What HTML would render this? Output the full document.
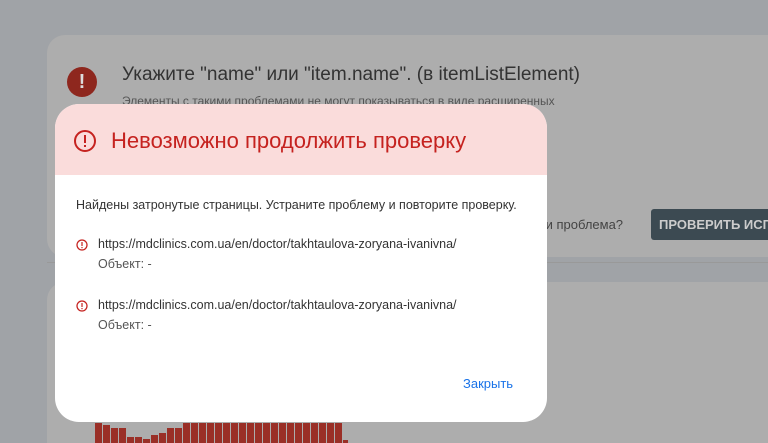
<!DOCTYPE html><html><head><meta charset="utf-8"><style>
html,body{margin:0;width:768px;height:443px;overflow:hidden}
body{background:#a0a3a7;position:relative;font-family:"Liberation Sans",sans-serif}
.a{position:absolute}
.b{position:absolute;background:#9a2f27;width:7px;bottom:0}
</style></head><body>
<div class="a" style="left:47px;top:35px;width:760px;height:222px;background:#adadad;border-radius:18px"></div>
<div class="a" style="left:47px;top:282px;width:760px;height:161px;background:#adadad;border-radius:18px 18px 0 0"></div>
<div class="a" style="left:47px;top:262px;width:721px;height:1px;background:#999"></div>
<div class="a" style="left:67px;top:67px;width:30px;height:30px;border-radius:50%;background:#8e271e;color:#ddd;font-weight:bold;font-size:20px;text-align:center;line-height:30px">!</div>
<div class="a" style="left:122px;top:64px;font-size:19px;color:#333;white-space:nowrap">Укажите "name" или "item.name". (в itemListElement)</div>
<div class="a" style="left:122px;top:94px;font-size:12px;color:#555;white-space:nowrap">Элементы с такими проблемами не могут показываться в виде расширенных</div>
<div class="a" style="left:538px;top:217px;font-size:13px;color:#444;white-space:nowrap">ли проблема?</div>
<div class="a" style="left:651px;top:209px;width:130px;height:31px;background:#3c4a52;border-radius:3px;color:#ccc;font-weight:bold;font-size:13px;line-height:31px;padding-left:8px;box-sizing:border-box;white-space:nowrap;overflow:hidden">ПРОВЕРИТЬ ИСПРАВЛЕНИЕ</div>
<div class="a" style="left:55px;top:104px;width:492px;height:318px;background:#fff;border-radius:24px;overflow:hidden;z-index:2">
<div style="height:71px;background:#fadcdb;position:relative">
<svg class="a" style="left:18px;top:25px" width="24" height="24" viewBox="0 0 24 24"><circle cx="12" cy="12" r="10" fill="none" stroke="#c5221f" stroke-width="2"/><rect x="11" y="6" width="2" height="8" fill="#c5221f"/><rect x="11" y="16" width="2" height="2" fill="#c5221f"/></svg>
<div class="a" style="left:56px;top:24px;font-size:22px;color:#c5221f;white-space:nowrap">Невозможно продолжить проверку</div></div>
<div class="a" style="left:21px;top:94px;font-size:12.5px;color:#333;white-space:nowrap">Найдены затронутые страницы. Устраните проблему и повторите проверку.</div>
<svg class="a" style="left:21px;top:135px" width="12" height="12" viewBox="0 0 24 24"><circle cx="12" cy="12" r="10" fill="none" stroke="#c5221f" stroke-width="2.5"/><rect x="10.8" y="6" width="2.4" height="8" fill="#c5221f"/><rect x="10.8" y="16" width="2.4" height="2.4" fill="#c5221f"/></svg>
<div class="a" style="left:43px;top:133px;font-size:12.5px;color:#333;white-space:nowrap">https://mdclinics.com.ua/en/doctor/takhtaulova-zoryana-ivanivna/</div>
<div class="a" style="left:43px;top:153px;font-size:12.5px;color:#555">Объект: -</div>
<svg class="a" style="left:21px;top:196px" width="12" height="12" viewBox="0 0 24 24"><circle cx="12" cy="12" r="10" fill="none" stroke="#c5221f" stroke-width="2.5"/><rect x="10.8" y="6" width="2.4" height="8" fill="#c5221f"/><rect x="10.8" y="16" width="2.4" height="2.4" fill="#c5221f"/></svg>
<div class="a" style="left:43px;top:194px;font-size:12.5px;color:#333;white-space:nowrap">https://mdclinics.com.ua/en/doctor/takhtaulova-zoryana-ivanivna/</div>
<div class="a" style="left:43px;top:214px;font-size:12.5px;color:#555">Объект: -</div>
<div class="a" style="left:408px;top:272px;font-size:13px;color:#1a73e8">Закрыть</div>
</div>
<div class="b" style="left:95px;top:423px"></div><div class="b" style="left:103px;top:425px"></div><div class="b" style="left:111px;top:428px"></div><div class="b" style="left:119px;top:428px"></div><div class="b" style="left:127px;top:437px"></div><div class="b" style="left:135px;top:437px"></div><div class="b" style="left:143px;top:439px"></div><div class="b" style="left:151px;top:435px"></div><div class="b" style="left:159px;top:433px"></div><div class="b" style="left:167px;top:428px"></div><div class="b" style="left:175px;top:428px"></div>
<div class="b" style="left:183px;top:423px"></div><div class="b" style="left:191px;top:423px"></div><div class="b" style="left:199px;top:423px"></div><div class="b" style="left:207px;top:423px"></div><div class="b" style="left:215px;top:423px"></div><div class="b" style="left:223px;top:423px"></div><div class="b" style="left:231px;top:423px"></div><div class="b" style="left:239px;top:423px"></div><div class="b" style="left:247px;top:423px"></div><div class="b" style="left:255px;top:423px"></div><div class="b" style="left:263px;top:423px"></div><div class="b" style="left:271px;top:423px"></div><div class="b" style="left:279px;top:423px"></div><div class="b" style="left:287px;top:423px"></div><div class="b" style="left:295px;top:423px"></div><div class="b" style="left:303px;top:423px"></div><div class="b" style="left:311px;top:423px"></div><div class="b" style="left:319px;top:423px"></div><div class="b" style="left:327px;top:423px"></div><div class="b" style="left:335px;top:423px"></div><div class="b" style="left:343px;top:440px;width:5px"></div>
</body></html>
